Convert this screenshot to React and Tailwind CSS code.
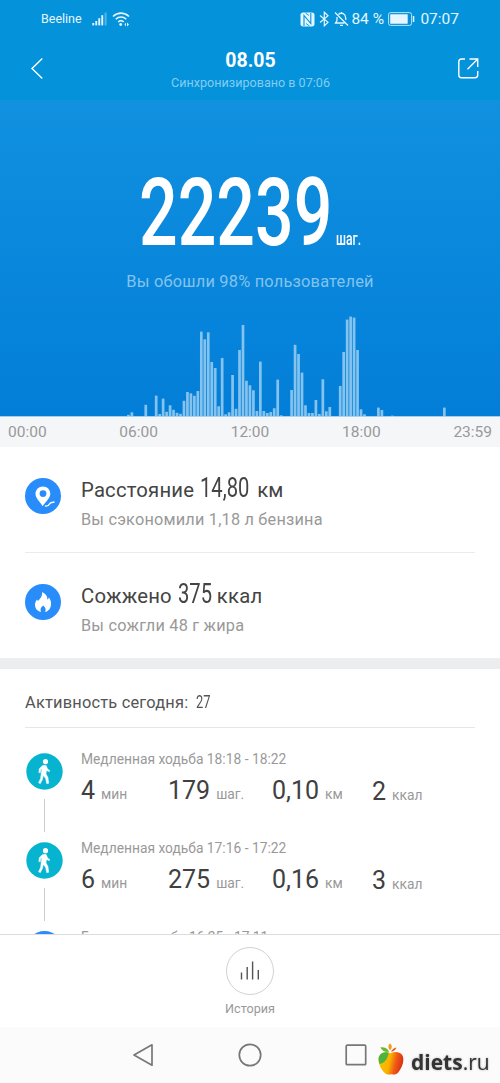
import React from 'react';

// one slot per ten minutes of the day: [slot, bar height]
const stepBars = [
  [37, 1.5], [38, 4], [42, 11.5], [45, 20.7], [46, 2.3], [47, 17.7], [48, 4.5], [49, 11],
  [50, 6.5], [51, 3.5], [52, 2.5], [53, 15.5], [54, 24.3], [55, 23], [56, 20.5], [57, 25.3],
  [58, 84.7], [59, 77], [60, 84], [61, 54.3], [62, 48.3], [63, 10], [64, 58.3], [65, 2],
  [66, 4], [67, 41.3], [68, 7.5], [69, 66.3], [70, 91.3], [71, 35.5], [72, 31], [73, 26],
  [74, 5.3], [75, 54.7], [76, 5.3], [77, 3.3], [78, 4.3], [79, 8], [80, 36.7], [81, 1],
  [84, 26.3], [85, 71.5], [86, 62.3], [87, 43.7], [88, 11], [89, 3.3], [90, 3.3], [91, 16.3],
  [92, 2.3], [93, 37], [94, 5], [95, 9.3], [98, 30.3], [99, 64.3], [100, 96.7], [101, 99.7],
  [102, 98.7], [103, 66.3], [104, 7], [105, 2], [109, 8.7], [110, 6.3], [113, 0.7], [128, 8.7],
];

const activities = [
  { title: 'Медленная ходьба 18:18 - 18:22', min: '4', steps: '179', km: '0,10', kcal: '2' },
  { title: 'Медленная ходьба 17:16 - 17:22', min: '6', steps: '275', km: '0,16', kcal: '3' },
];

const StatusBar = () => (
  <div className="flex h-[38px] items-center justify-between pl-[41px] pr-[41px] text-[#e4f6ff]">
    <div className="flex items-center">
      <span className="w-[51px] text-[12.5px]">Beeline</span>
      <svg className="h-[14px] w-[15px]" viewBox="0 0 15 14" fill="currentColor">
        <rect x="0.3" y="11" width="1.9" height="2.4" />
        <rect x="3.3" y="9" width="1.9" height="4.4" />
        <rect x="6.3" y="6.2" width="1.9" height="7.2" />
        <rect x="9.3" y="3.2" width="1.9" height="10.2" />
        <rect x="12.6" y="0.5" width="2" height="12.9" opacity="0.35" />
      </svg>
      <svg className="ml-[5px] h-[16px] w-[18px]" viewBox="0 0 18 16" fill="none" stroke="currentColor" strokeWidth="1.6">
        <path d="M1 5.5C5.5 1 12.5 1 17 5.5M3.7 8.3C6.8 5.3 11.2 5.3 14.3 8.3M6.2 11C8 9.3 10 9.3 11.8 11" />
        <circle cx="8.7" cy="13.5" r="1.4" fill="currentColor" stroke="none" />
        <path d="M12.5 13.5l1.500-2v4zM15 11.500l2 2-2 2z" fill="currentColor" stroke="none" />
      </svg>
    </div>
    <div className="flex items-center">
      <svg className="h-[15px] w-[15px]" viewBox="0 0 15 15">
        <path d="M3 0.5H12C13.7 0.5 14.5 1.5 14.5 3V12C14.5 13.5 13.7 14.5 12 14.5H3C1.3 14.5 0.5 13.5 0.5 12V3C0.5 1.5 1.3 0.5 3 0.5Z" fill="currentColor" />
        <path d="M4 14V3.500L10.800 11.500V1" fill="none" stroke="#0492da" strokeWidth="1.100" />
        <path d="M5.500 1L9 3.500M6 11.500L9.500 14" stroke="#0492da" strokeWidth="0.900" />
      </svg>
      <svg className="ml-[4px] h-[16px] w-[11px]" viewBox="0 0 11 16" fill="none" stroke="currentColor" strokeWidth="1.2">
        <path d="M1 4.5L9 11.2L5.3 14.8V1.2L9 4.8L1 11.5" />
      </svg>
      <svg className="ml-[4px] h-[16px] w-[15px]" viewBox="0 0 15 16" fill="none" stroke="currentColor" strokeWidth="1.3">
        <path d="M1 1.5L14 14.5M4.5 3.5C6 1.8 9 1.8 10.7 3.8C11.8 5.2 11.5 7.5 12 9M3 6V9.5L1.5 12H10.5M6 14.3H9M7.5 1V2.5" />
      </svg>
      <span className="ml-[2px] w-[37px] whitespace-nowrap text-[15.5px] leading-5">84 %</span>
      <svg className="h-[14px] w-[27px]" viewBox="0 0 27 14">
        <rect x="0.6" y="0.6" width="23" height="12.8" rx="2" fill="none" stroke="currentColor" strokeWidth="1" opacity="0.8" />
        <rect x="2.2" y="2.2" width="17.5" height="9.6" rx="0.5" fill="currentColor" />
        <rect x="24.8" y="4" width="1.5" height="6" fill="currentColor" />
      </svg>
      <span className="ml-[5px] text-[15.5px] leading-5">07:07</span>
    </div>
  </div>
);

const Header = () => (
  <div className="flex h-[62px] items-start justify-between pl-[30px] pr-[20px] text-white">
    <svg className="mt-[19px] h-[23px] w-[14px]" viewBox="0 0 14 23" fill="none" stroke="currentColor" strokeWidth="1.4">
      <path d="M12.3 1.5L2 11.5L12.3 21.5" />
    </svg>
    <div className="pt-[11px] text-center">
      <div className="text-[19.5px] font-bold leading-6">08.05</div>
      <div className="mt-[2px] text-[12.6px] leading-4 text-[#82cdf3]">Синхронизировано в 07:06</div>
    </div>
    <svg className="mt-[19px] h-[23px] w-[23px]" viewBox="0 0 23 23" fill="none" stroke="currentColor" strokeWidth="1.4">
      <path d="M8 2H4.5Q1.8 2 1.8 4.7V18Q1.8 20.700 4.500 20.700H18Q20.700 20.700 20.700 18V14" />
      <path d="M12.500 2H20.700V10M20.500 2.200L10.500 12.200" />
    </svg>
  </div>
);

const StepsHero = () => (
  <div className="flex h-[317px] shrink-0 flex-col bg-gradient-to-b from-[#1191e0] to-[#037ed8]">
    <div className="flex h-[165px] items-start pl-[139px] pt-[76px] text-white">
      <span className="block w-[197px] whitespace-nowrap">
        <span className="inline-block origin-left scale-x-[0.716] text-[95px] font-medium leading-[74px]">22239</span>
      </span>
      <span className="block w-[25px] whitespace-nowrap pt-[50px]">
        <span className="inline-block origin-left scale-x-[0.66] text-[18.5px] font-medium leading-[26px]">шаг.</span>
      </span>
    </div>
    <div className="pt-[6px] text-center text-[16.4px] leading-[22px] tracking-[0.2px] text-[#83c3ee]">
      Вы обошли 98% пользователей
    </div>
    <svg className="mt-auto h-[110px] w-[500px]" viewBox="0 0 500 110">
      {stepBars.map(([slot, height]) => (
        <rect key={slot} x={slot * 3.472 - 1.4} y={109.3 - height} width="2.7" height={height} fill="#84c3ee" />
      ))}
      <rect x="0" y="109.3" width="500" height="0.7" fill="#e8f3fb" />
    </svg>
  </div>
);

const Metric = ({ icon, label, value, unit, valueClass, hint }) => (
  <div className="flex h-[105px] items-start pt-[25px]">
    <div className="mt-[6px] h-9 w-9 shrink-0">{icon}</div>
    <div className="ml-5">
      <div className="flex h-8 items-baseline whitespace-nowrap text-[20.3px] leading-8 tracking-[0.2px] text-[#444]">
        <span>{label}</span>
        <span className={valueClass}>
          <span className="inline-block origin-left scale-x-[0.72] text-[28px] leading-8 tracking-normal">{value}</span>
        </span>
        <span>{unit}</span>
      </div>
      <div className="mt-[6px] text-[16.3px] leading-5 tracking-[0.2px] text-[#999]">{hint}</div>
    </div>
  </div>
);

const DistanceIcon = () => (
  <svg className="h-9 w-9" viewBox="0 0 36 36">
    <circle cx="18" cy="18" r="18" fill="#288cfb" />
    <path fillRule="evenodd" d="M18 8.5C13.7 8.5 10.5 11.7 10.5 15.8C10.5 20.5 15 23.8 17.7 28.3C20.5 23.8 25.3 20.5 25.3 15.8C25.3 11.7 22.2 8.5 18 8.5ZM18 12.2A3.4 3.4 0 1 1 18 19A3.4 3.4 0 1 1 18 12.2Z" fill="white" />
    <path d="M20 28C23 28.3 24 27.5 24.5 26C25.2 24.2 27 24.5 29.5 24" fill="none" stroke="white" strokeWidth="1.3" />
  </svg>
);

const FlameIcon = () => (
  <svg className="h-9 w-9" viewBox="0 0 36 36">
    <circle cx="18" cy="18" r="18" fill="#288cfb" />
    <path d="M17.2 8C21.5 10.5 22.5 12.5 22.3 15.5C23.3 15.2 23.6 14.3 23.7 13.2C25.5 15.5 26.3 17.500 26 20.500C25.700 24.500 23.500 27.300 20.200 28C21.200 25.200 20.600 23.500 18.200 21.500C15.500 23.500 15 25.200 16 28C12.300 27.200 10 24.500 10 20.800C10 18.600 10.800 17.200 12 15.500L13 17C15.500 14.500 17.500 12 17.200 8Z" fill="white" />
  </svg>
);

const WalkIcon = () => (
  <svg className="h-[37px] w-[37px]" viewBox="0 0 37 37">
    <circle cx="18.5" cy="18.5" r="18.2" fill="#06b4d0" />
    <circle cx="19.5" cy="8.7" r="2.6" fill="white" />
    <path d="M16.5 12.5L20 12.2L21.7 16L23.8 17.5L23.3 18.8L20.6 17.5L20 20.8L22 24.5L22.8 30.3L20.7 30.7L19.6 25.5L17.3 22.5L16.5 26.5L14.3 30.7L12.5 29.8L14.5 25.5L15.4 19L15.8 15.7L14.8 16.6L14.3 19.8L12.8 19.6L13.2 15.7Z" fill="white" stroke="white" strokeWidth="0.4" strokeLinejoin="round" />
  </svg>
);

const Stat = ({ value, unit, className }) => (
  <div className={className}>
    <span className="text-[25px] leading-[30px] text-[#404040]">{value}</span>
    <span className="ml-[6px] text-[13.8px] text-[#999]">{unit}</span>
  </div>
);

const Activity = ({ activity }) => (
  <div className="flex h-[89px]">
    <div className="flex w-[37px] flex-col items-center">
      <WalkIcon />
      <div className="mt-[9px] h-[33px] w-px bg-[#ccc]" />
    </div>
    <div className="ml-[18px] -mt-[4px]">
      <div className="text-[13.8px] leading-5 text-[#999]">{activity.title}</div>
      <div className="mt-[7px] flex whitespace-nowrap">
        <Stat value={activity.min} unit="мин" className="w-[87px]" />
        <Stat value={activity.steps} unit="шаг." className="w-[104px]" />
        <Stat value={activity.km} unit="км" className="w-[100px]" />
        <Stat value={activity.kcal} unit="ккал" className="pt-px" />
      </div>
    </div>
  </div>
);

const BottomBar = () => (
  <div className="flex h-[93px] shrink-0 flex-col items-center border-t border-[#dcdcdc] bg-white pt-[12px]">
    <div className="flex h-[48px] w-[48px] items-center justify-center rounded-full border border-[#d2d2d2]">
      <svg className="h-[20px] w-[20px]" viewBox="0 0 20 20" stroke="#555" strokeWidth="1.4">
        <path d="M1.5 11.500V18.500M7.200 6V18.500M12.600 0.500V18.500M18.300 9V18.500" />
      </svg>
    </div>
    <span className="mt-[6px] text-[12.6px] leading-4 text-[#999]">История</span>
  </div>
);

const AppleLogo = () => (
  <svg className="h-[33px] w-[26px]" viewBox="0 0 27 34">
    <defs>
      <linearGradient id="appleSkin" x1="0" y1="0.3" x2="1" y2="0.5">
        <stop offset="0" stopColor="#f7c500" />
        <stop offset="0.45" stopColor="#fbb000" />
        <stop offset="0.7" stopColor="#ef5a16" />
        <stop offset="1" stopColor="#dc2a12" />
      </linearGradient>
    </defs>
    <path d="M13 10.5C17 8.5 22 8.5 25 12C28 17 25.5 25 21 30.5C18.5 33.3 16 32.5 14 32.3C11 33 8.5 33 6 30C2 25.5 -0.5 19 1 14C3 9 9 8.5 13 10.5Z" fill="url(#appleSkin)" />
    <path d="M13 10.5C9 8.5 3 9 1 14C0.3 16.5 0.7 19 1.5 21.5C5 21.5 9.5 19 11 10Z" fill="#4db33d" />
    <path d="M11.5 9C8 9.5 4.5 8.5 2.5 4.5C6.5 4 10 5.5 11.5 9Z" fill="#68b92e" />
    <path d="M12.5 7.5C10 4.5 10.5 2 12.5 0.5C15 2.5 15 5 12.5 7.5Z" fill="#f59b16" />
    <path d="M13.5 9C14.5 6.5 16.5 5 19 4.5C18.5 6.5 16.5 8.5 13.5 9Z" fill="#e95420" />
  </svg>
);

const NavBar = () => (
  <div className="flex h-[56px] shrink-0 items-center bg-[#fbfbfb] pl-[132px]">
    <svg className="h-[24px] w-[22px]" viewBox="0 0 22 24" fill="none" stroke="#777" strokeWidth="1.7" strokeLinejoin="round">
      <path d="M20 1.800V22.200L2 12Z" />
    </svg>
    <svg className="ml-[84px] h-[24px] w-[24px]" viewBox="0 0 24 24" fill="none" stroke="#777" strokeWidth="1.7">
      <circle cx="12" cy="12" r="10.7" />
    </svg>
    <svg className="ml-[83px] h-[22px] w-[22px]" viewBox="0 0 22 22" fill="none" stroke="#777" strokeWidth="1.7">
      <rect x="1.2" y="1.2" width="19.5" height="19.5" rx="1" />
    </svg>
    <div className="ml-[11px] flex items-center pt-[8px]">
      <AppleLogo />
      <span className="ml-[7px] pt-[5px] font-['Open_Sans',sans-serif] text-[21px] leading-6 text-[#333] drop-shadow-[0_0_1px_#aaa]">
        <b>diets</b>.ru
      </span>
    </div>
  </div>
);

export default function App() {
  return (
    <div className="flex h-[1083px] w-[500px] flex-col overflow-hidden bg-white font-[Roboto,sans-serif]">
      <div className="h-[100px] shrink-0 bg-[#0492da]">
        <StatusBar />
        <Header />
      </div>
      <StepsHero />

      {/* Time axis */}
      <div className="flex h-[30px] shrink-0 items-center justify-between bg-[#f5f6f8] px-[8px] pt-[2px] text-[15.5px] text-[#999]">
        <span>00:00</span>
        <span>06:00</span>
        <span>12:00</span>
        <span>18:00</span>
        <span>23:59</span>
      </div>

      <div className="h-[211px] shrink-0 px-[25px]">
        <Metric
          icon={<DistanceIcon />}
          label="Расстояние"
          value="14,80"
          unit="км"
          valueClass="ml-[6px] w-[57px]"
          hint="Вы сэкономили 1,18 л бензина"
        />
        <div className="h-px bg-[#ebebeb]" />
        <Metric
          icon={<FlameIcon />}
          label="Сожжено"
          value="375"
          unit="ккал"
          valueClass="ml-[6px] w-[39px]"
          hint="Вы сожгли 48 г жира"
        />
      </div>
      <div className="h-[11px] shrink-0 bg-[#ecedef]" />

      {/* Today's activity */}
      <div className="h-[265px] shrink-0 overflow-hidden px-[25px]">
        <div className="flex h-[59px] items-baseline whitespace-nowrap border-b border-[#e6e6e6] pt-[19px] text-[16.4px] leading-7 tracking-[0.2px] text-[#555]">
          <span>Активность сегодня:</span>
          <span className="ml-[8px] w-[15px]">
            <span className="inline-block origin-left scale-x-[0.68] text-[19px] tracking-normal">27</span>
          </span>
        </div>
        <div className="pt-[25px] pl-px">
          {activities.map((activity) => (
            <Activity key={activity.title} activity={activity} />
          ))}
          <div className="flex">
            <div className="h-[37px] w-[37px] rounded-full bg-[#288cfb]" />
            <div className="ml-[18px] -mt-[4px] text-[13.8px] leading-5 text-[#999]">Быстрая ходьба 16:25 - 17:11</div>
          </div>
        </div>
      </div>

      <BottomBar />
      <NavBar />
    </div>
  );
}
